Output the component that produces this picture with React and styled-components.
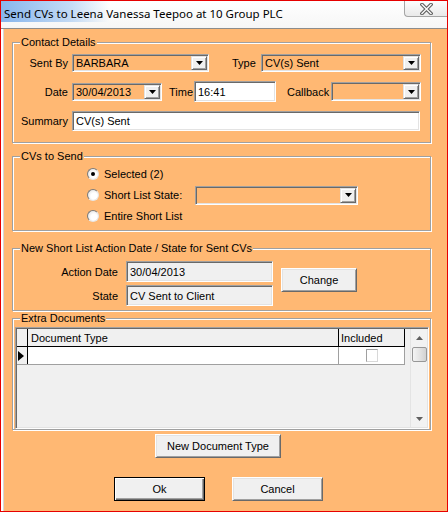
import React from 'react';
import styled, { createGlobalStyle, css } from 'styled-components';

const ORANGE = '#ffb873';

const GlobalStyle = createGlobalStyle`
  html, body {
    margin: 0;
    padding: 0;
    background: #fff;
  }
  body {
    font-family: "Liberation Sans", Arial, sans-serif;
    font-size: 11px;
    color: #000;
  }
  * {
    box-sizing: border-box;
  }
`;

const sunken = css`
  border: 1px solid;
  border-color: #a0a0a0 #fff #fff #a0a0a0;
  box-shadow: inset 1px 1px #696969, inset -1px -1px #e3e3e3;
`;

const Window = styled.div`
  width: 448px;
  height: 512px;
  border: 1px solid #e60000;
  display: flex;
  flex-direction: column;
  background: #fff;
`;

const TitleBar = styled.div`
  height: 28px;
  flex: none;
  display: flex;
  align-items: flex-start;
  border-bottom: 1px solid #8c8c8c;
  background:
    linear-gradient(to right, rgba(96, 158, 232, 0.75), rgba(150, 192, 240, 0.55) 70px, rgba(255, 255, 255, 0) 108px) 0 0 / 110px 21px no-repeat,
    linear-gradient(#fff, #f6f6f6);
`;

const Title = styled.div`
  padding: 5px 0 0 3px;
  font-family: "Noto Sans", "Open Sans", sans-serif;
  font-size: 11.5px;
  line-height: 16px;
  white-space: nowrap;
`;

const CloseBtn = styled.div`
  margin-left: auto;
  width: 43px;
  height: 16px;
  display: flex;
  align-items: center;
  justify-content: center;
  border-left: 1px solid #a5a5a5;
  border-bottom: 1px solid #a5a5a5;
  border-radius: 0 0 0 4px;
  background: linear-gradient(#fdfdfd, #e9e9e9);
`;

const Body = styled.div`
  flex: 1;
  background: ${ORANGE};
  box-shadow: inset 2px 0 #fff, inset 3px 0 #d6d6d6;
  padding: 13px 0 0 11px;
  display: flex;
  flex-direction: column;
`;

const GroupBox = styled.div`
  width: 419px;
  height: ${p => p.$h}px;
  margin-top: ${p => p.$mt}px;
  flex: none;
  border: 1px solid #a0a0a0;
  box-shadow: inset 1px 1px #fff, 1px 1px #fff;
  display: flex;
  flex-direction: column;
`;

const Legend = styled.div`
  align-self: flex-start;
  margin: -7px 0 0 7px;
  padding: 0 1px;
  height: 13px;
  line-height: 13px;
  background: ${ORANGE};
  white-space: nowrap;
`;

const Row = styled.div`
  display: flex;
  align-items: center;
  height: ${p => p.$h}px;
  margin-top: ${p => p.$mt || 0}px;
  padding-left: ${p => p.$pl || 0}px;
`;

const Label = styled.span`
  flex: none;
  width: ${p => (p.$w ? `${p.$w}px` : 'auto')};
  margin-left: ${p => p.$ml || 0}px;
  text-align: ${p => (p.$left ? 'left' : 'right')};
  white-space: nowrap;
`;

const ComboBox = styled.div`
  ${sunken};
  flex: none;
  display: flex;
  width: ${p => p.$w}px;
  height: ${p => p.$h}px;
  margin-left: ${p => p.$ml || 0}px;
  padding: 1px;
`;

const FieldText = styled.span`
  flex: 1;
  padding-left: 2px;
  display: flex;
  align-items: center;
  white-space: nowrap;
  overflow: hidden;
`;

const DropBtn = styled.div`
  width: 16px;
  flex: none;
  display: flex;
  align-items: center;
  justify-content: center;
  background: #f0f0f0;
  border: 1px solid;
  border-color: #e3e3e3 #696969 #696969 #e3e3e3;
  box-shadow: inset 1px 1px #fff, inset -1px -1px #a0a0a0;
`;

const TextBox = styled.div`
  ${sunken};
  flex: none;
  display: flex;
  align-items: center;
  width: ${p => p.$w}px;
  height: ${p => p.$h}px;
  margin-left: ${p => p.$ml || 0}px;
  padding-left: 3px;
  background: ${p => (p.$readonly ? '#f0f0f0' : '#fff')};
  white-space: nowrap;
`;

const RadioCircle = styled.span`
  flex: none;
  width: 12px;
  height: 12px;
  border-radius: 50%;
  border: 1px solid;
  border-color: #7c7c7c #e8e8e8 #e8e8e8 #7c7c7c;
  background: radial-gradient(circle at 60% 60%, #fff 35%, #d9d9d9 100%);
  display: flex;
  align-items: center;
  justify-content: center;
  margin-right: 5px;

  &::after {
    content: '';
    width: 4px;
    height: 4px;
    border-radius: 50%;
    background: ${p => (p.$checked ? '#000' : 'transparent')};
  }
`;

const Button = styled.div`
  flex: none;
  width: ${p => p.$w}px;
  height: 24px;
  margin-left: ${p => p.$ml || 0}px;
  margin-top: ${p => p.$mt || 0}px;
  align-self: flex-start;
  display: flex;
  align-items: center;
  justify-content: center;
  background: #f0f0f0;
  border: 1px solid;
  ${p =>
    p.$default
      ? css`
          border-color: #000;
          box-shadow: inset 1px 1px #fff, inset -1px -1px #696969, inset -2px -2px #a0a0a0;
        `
      : css`
          border-color: #fff #696969 #696969 #fff;
          box-shadow: inset 1px 1px #e3e3e3, inset -1px -1px #a0a0a0;
        `}
`;

const Column = styled.div`
  display: flex;
  flex-direction: column;
`;

const Grid = styled.div`
  ${sunken};
  width: 414px;
  height: 102px;
  margin: 2px 0 0 2px;
  padding: 1px;
  background: #f0f0f0;
  display: flex;
`;

const Table = styled.div`
  flex: 1;
  display: flex;
  flex-direction: column;
`;

const GridRow = styled.div`
  display: flex;
  height: 18px;
  border-bottom: 1px solid ${p => (p.$header ? '#000' : '#a0a0a0')};
  background: ${p => (p.$header ? '#f0f0f0' : '#fff')};
  width: 388px;
`;

const Cell = styled.div`
  flex: none;
  width: ${p => p.$w}px;
  height: 100%;
  display: flex;
  align-items: center;
  justify-content: ${p => (p.$center ? 'center' : 'flex-start')};
  padding-left: ${p => p.$pl || 0}px;
  border-right: 1px solid ${p => (p.$dark ? '#000' : '#a0a0a0')};
  background: ${p => (p.$gray ? '#f0f0f0' : 'transparent')};
  white-space: nowrap;
`;

const CheckBox = styled.span`
  width: 12px;
  height: 13px;
  background: #fff;
  border: 1px solid;
  border-color: #a0a0a0 #d8d8d8 #d8d8d8 #a0a0a0;
`;

const ScrollBar = styled.div`
  width: 17px;
  flex: none;
  display: flex;
  flex-direction: column;
  align-items: center;
  background: #f2f2f2;
  border-left: 1px solid #e4e4e4;
`;

const ScrollArrow = styled.div`
  height: 17px;
  width: 100%;
  display: flex;
  align-items: center;
  justify-content: center;
  margin-top: ${p => (p.$bottom ? 'auto' : 0)};
`;

const Thumb = styled.div`
  width: 15px;
  height: 15px;
  margin-top: 1px;
  border: 1px solid #979797;
  border-radius: 2px;
  background: linear-gradient(to right, #f4f4f4, #e4e4e4 50%, #d2d2d2);
`;

const Caret = ({ up, color = '#000' }) => (
  <svg width="7" height="4" viewBox="0 0 7 4">
    <polygon points={up ? '0,4 7,4 3.5,0' : '0,0 7,0 3.5,4'} fill={color} />
  </svg>
);

const Combo = ({ w, h, ml, children }) => (
  <ComboBox $w={w} $h={h} $ml={ml}>
    <FieldText>{children}</FieldText>
    <DropBtn>
      <Caret />
    </DropBtn>
  </ComboBox>
);

export default function App() {
  return (
    <>
      <GlobalStyle />
      <Window>
        <TitleBar>
          <Title>Send CVs to Leena Vanessa Teepoo at 10 Group PLC</Title>
          <CloseBtn>
            <svg width="13" height="12" viewBox="0 0 13 12">
              <path d="M2 1.5 L11 10.5 M11 1.5 L2 10.5" stroke="#5f5f5f" strokeWidth="3.6" strokeLinecap="square" />
              <path d="M2 1.5 L11 10.5 M11 1.5 L2 10.5" stroke="#fbfbfb" strokeWidth="1.4" strokeLinecap="square" />
            </svg>
          </CloseBtn>
        </TitleBar>

        <Body>
          <GroupBox $h={101} $mt={0}>
            <Legend>Contact Details</Legend>
            <Row $h={18} $mt={5}>
              <Label $w={55}>Sent By</Label>
              <Combo w={137} h={18} ml={4}>BARBARA</Combo>
              <Label $w={24} $ml={23} $left>Type</Label>
              <Combo w={160} h={18} ml={5}>CV(s) Sent</Combo>
            </Row>
            <Row $h={21} $mt={9}>
              <Label $w={55}>Date</Label>
              <Combo w={90} h={18} ml={4}>30/04/2013</Combo>
              <Label $w={22} $ml={7} $left>Time</Label>
              <TextBox $w={82} $h={21} $ml={3}>16:41</TextBox>
              <Label $w={41} $ml={11} $left>Callback</Label>
              <Combo w={90} h={19} ml={3} />
            </Row>
            <Row $h={20} $mt={9}>
              <Label $w={55}>Summary</Label>
              <TextBox $w={348} $h={20} $ml={4}>CV(s) Sent</TextBox>
            </Row>
          </GroupBox>

          <GroupBox $h={75} $mt={13}>
            <Legend>CVs to Send</Legend>
            <Row $h={20} $mt={1} $pl={74}>
              <RadioCircle $checked />
              <Label $left>Selected (2)</Label>
            </Row>
            <Row $h={20} $mt={1} $pl={74}>
              <RadioCircle />
              <Label $w={91} $left>Short List State:</Label>
              <Combo w={163} h={19} />
            </Row>
            <Row $h={20} $mt={1} $pl={74}>
              <RadioCircle />
              <Label $left>Entire Short List</Label>
            </Row>
          </GroupBox>

          <GroupBox $h={63} $mt={17}>
            <Legend>New Short List Action Date / State for Sent CVs</Legend>
            <Row $h={51}>
              <Column>
                <Row $h={21} $mt={6}>
                  <Label $w={105}>Action Date</Label>
                  <TextBox $w={147} $h={21} $ml={8} $readonly>30/04/2013</TextBox>
                </Row>
                <Row $h={21} $mt={3}>
                  <Label $w={105}>State</Label>
                  <TextBox $w={147} $h={21} $ml={8} $readonly>CV Sent to Client</TextBox>
                </Row>
              </Column>
              <Button $w={76} $ml={8} $mt={13}>Change</Button>
            </Row>
          </GroupBox>

          <GroupBox $h={112} $mt={7}>
            <Legend>Extra Documents</Legend>
            <Grid>
              <Table>
                <GridRow $header>
                  <Cell $w={11} $dark />
                  <Cell $w={311} $pl={3} $dark>Document Type</Cell>
                  <Cell $w={66} $pl={2} $dark>Included</Cell>
                </GridRow>
                <GridRow>
                  <Cell $w={11} $dark $gray $pl={1}>
                    <svg width="6" height="10" viewBox="0 0 6 10">
                      <polygon points="0,0 6,5 0,10" fill="#000" />
                    </svg>
                  </Cell>
                  <Cell $w={311} />
                  <Cell $w={66} $center>
                    <CheckBox />
                  </Cell>
                </GridRow>
              </Table>
              <ScrollBar>
                <ScrollArrow>
                  <Caret up color="#606060" />
                </ScrollArrow>
                <Thumb />
                <ScrollArrow $bottom>
                  <Caret color="#606060" />
                </ScrollArrow>
              </ScrollBar>
            </Grid>
          </GroupBox>

          <Row $h={24} $mt={4}>
            <Button $w={126} $ml={143}>New Document Type</Button>
          </Row>
          <Row $h={24} $mt={19}>
            <Button $w={91} $ml={102} $default>Ok</Button>
            <Button $w={91} $ml={27}>Cancel</Button>
          </Row>
        </Body>
      </Window>
    </>
  );
}
